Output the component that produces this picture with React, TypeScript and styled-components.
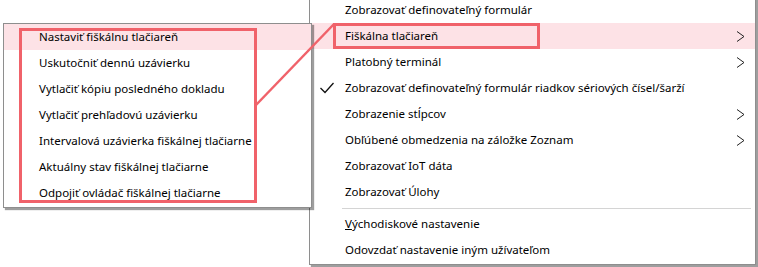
import React from 'react'
import styled, { createGlobalStyle } from 'styled-components'

const GlobalStyle = createGlobalStyle`
    html, body {
        margin: 0;
        padding: 0;
        background: #ffffff;
        overflow: hidden;
    }
    body {
        font-family: "Segoe UI", "Noto Sans", "Liberation Sans", sans-serif;
        font-size: 11.5px;
        color: #000;
    }
`

const StyledStage = styled.div`
    position: relative;
    width: 758px;
    height: 267px;
    overflow: hidden;
    padding-left: 309px;
    box-sizing: border-box;
`

const StyledMenu = styled.div`
    width: 447px;
    box-sizing: border-box;
    background: #fff;
    border: 1px solid #8e8e8e;
    box-shadow: 2px 2px 1px rgba(0, 0, 0, 0.38);
    padding: 2px 0 1px 0;
    margin-top: -6px;
`

const StyledSubMenu = styled(StyledMenu)`
    position: absolute;
    left: 3px;
    top: 23px;
    width: 309px;
    padding: 0 0 1px 0;
    margin-top: 0;
    z-index: 2;
`

const StyledItem = styled.div<{ $active?: boolean }>`
    position: relative;
    display: flex;
    align-items: center;
    height: 26px;
    padding-left: 35px;
    padding-right: 10px;
    background: ${(p) => (p.$active ? '#fde2e6' : 'transparent')};
    white-space: nowrap;
`

const StyledLabel = styled.span`
    flex: 1;
    line-height: 16px;
`

const StyledCheck = styled.svg`
    position: absolute;
    left: 10px;
    top: 7px;
`

const StyledArrow = styled.svg`
    margin-right: 0px;
`

const StyledSeparator = styled.div`
    height: 1px;
    margin: 3px 4px 2px 32px;
    background: #d4d4d4;
`

const StyledMark = styled.div<{ $x: number; $y: number; $w: number; $h: number }>`
    position: absolute;
    left: ${(p) => p.$x}px;
    top: ${(p) => p.$y}px;
    width: ${(p) => p.$w}px;
    height: ${(p) => p.$h}px;
    box-sizing: border-box;
    border: 3px solid #f0626a;
    z-index: 3;
    pointer-events: none;
`

const StyledOverlay = styled.svg`
    position: absolute;
    left: 0;
    top: 0;
    z-index: 4;
    pointer-events: none;
`

const Arrow = () => (
    <StyledArrow width="9" height="11" viewBox="0 0 9 11">
        <polyline points="1,0.5 8,5.5 1,10.5" fill="none" stroke="#222" strokeWidth="1" />
    </StyledArrow>
)

const Check = () => (
    <StyledCheck width="14" height="12" viewBox="0 0 14 12">
        <polyline points="0.5,6 5,10.5 13.5,1" fill="none" stroke="#111" strokeWidth="1.3" />
    </StyledCheck>
)

const subItems = [
    'Nastaviť fiškálnu tlačiareň',
    'Uskutočniť dennú uzávierku',
    'Vytlačiť kópiu posledného dokladu',
    'Vytlačiť prehľadovú uzávierku',
    'Intervalová uzávierka fiškálnej tlačiarne',
    'Aktuálny stav fiškálnej tlačiarne',
    'Odpojiť ovládač fiškálnej tlačiarne',
]

const App = () => {
    return (
        <>
            <GlobalStyle />
            <StyledStage>
                <StyledMenu>
                    <StyledItem>
                        <StyledLabel>Zobrazovať definovateľný formulár</StyledLabel>
                    </StyledItem>
                    <StyledItem $active>
                        <StyledLabel>Fiškálna tlačiareň</StyledLabel>
                        <Arrow />
                    </StyledItem>
                    <StyledItem>
                        <StyledLabel>Platobný terminál</StyledLabel>
                        <Arrow />
                    </StyledItem>
                    <StyledItem>
                        <Check />
                        <StyledLabel>Zobrazovať definovateľný formulár riadkov sériových čísel/šarží</StyledLabel>
                    </StyledItem>
                    <StyledItem>
                        <StyledLabel>Zobrazenie stĺpcov</StyledLabel>
                        <Arrow />
                    </StyledItem>
                    <StyledItem>
                        <StyledLabel>Obľúbené obmedzenia na záložke Zoznam</StyledLabel>
                        <Arrow />
                    </StyledItem>
                    <StyledItem>
                        <StyledLabel>Zobrazovať IoT dáta</StyledLabel>
                    </StyledItem>
                    <StyledItem>
                        <StyledLabel>Zobrazovať Úlohy</StyledLabel>
                    </StyledItem>
                    <StyledSeparator />
                    <StyledItem>
                        <StyledLabel><u>V</u>ýchodiskové nastavenie</StyledLabel>
                    </StyledItem>
                    <StyledItem>
                        <StyledLabel>Odovzdať nastavenie iným užívateľom</StyledLabel>
                    </StyledItem>
                </StyledMenu>

                <StyledSubMenu>
                    {subItems.map((text, i) => (
                        <StyledItem key={text} $active={i === 0}>
                            <StyledLabel>{text}</StyledLabel>
                        </StyledItem>
                    ))}
                </StyledSubMenu>

                {/* annotation boxes */}
                <StyledMark $x={19} $y={28} $w={238} $h={175} />
                <StyledMark $x={333} $y={23} $w={207} $h={26} />
                <StyledOverlay width="758" height="267">
                    <line x1="256" y1="105" x2="334" y2="24" stroke="#f0626a" strokeWidth="2.5" />
                </StyledOverlay>
            </StyledStage>
        </>
    )
}
export default App
